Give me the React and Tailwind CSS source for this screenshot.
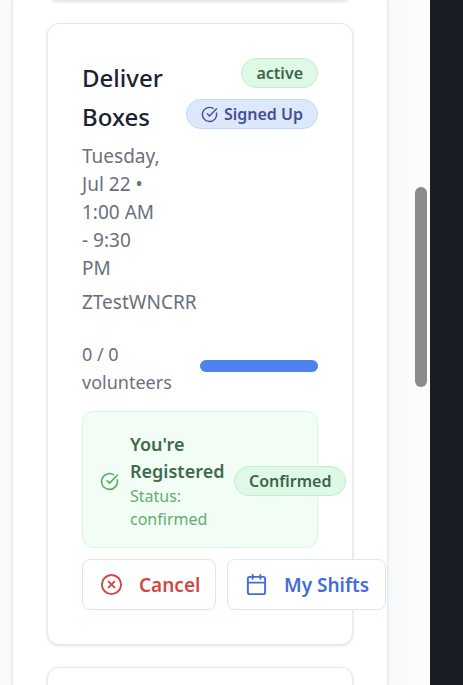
import React from "react";
import { CircleCheckBig, CircleX, Calendar } from "lucide-react";

const cardClass =
  "rounded-xl border border-[#e5e7eb] bg-white shadow-[0_1px_3px_rgba(0,0,0,0.12)]";

function Badge({ tone, children }) {
  const tones = {
    green: "border-[#bbf0cb] bg-[#e0f9e7] text-[#3c6549]",
    blue: "border-[#bfdafb] bg-[#dde8fb] text-[#435097]",
  };
  return (
    <span
      className={`inline-flex h-[30px] shrink-0 items-center gap-1.5 whitespace-nowrap rounded-full border px-3.5 text-base leading-6 font-semibold ${tones[tone]}`}
    >
      {children}
    </span>
  );
}

function ShiftCard() {
  return (
    <article className={`${cardClass} p-[34px] text-[19px] leading-7 text-[#69707d]`}>
      <header className="flex items-start justify-between">
        <div className="w-20">
          <h2 className="text-2xl leading-[39px] font-medium text-[#1b2230]">Deliver Boxes</h2>
          <p className="mt-1.5">Tuesday, Jul 22 • 1:00 AM - 9:30 PM</p>
          <p className="mt-1.5 whitespace-nowrap">ZTestWNCRR</p>
        </div>
        <div className="flex flex-col items-end gap-[11px]">
          <Badge tone="green">active</Badge>
          <Badge tone="blue">
            <CircleCheckBig className="size-[17px]" strokeWidth={2} />
            Signed Up
          </Badge>
        </div>
      </header>

      <div className="mt-6 flex items-center justify-between">
        <p className="w-24 text-lg leading-7">0 / 0 volunteers</p>
        <div
          className="mt-[-4px] h-3 w-1/2 rounded-full bg-[#4f82ee]"
          role="progressbar"
          aria-label="Volunteers"
        />
      </div>

      <section className="mt-[15px] flex items-center rounded-xl border border-[#d5f7df] bg-[#f2fdf5] px-[17px] pt-[19px] pb-4">
        <CircleCheckBig className="size-[19px] shrink-0 text-[#55ae68]" strokeWidth={2} />
        <div className="ml-[11px] w-[94px] shrink-0">
          <h3 className="text-lg leading-[27px] font-semibold text-[#3f6b4b]">You're Registered</h3>
          <p className="text-base leading-[23px] text-[#62ad70]">Status: confirmed</p>
        </div>
        <div className="ml-2.5 flex">
          <Badge tone="green">Confirmed</Badge>
        </div>
      </section>

      <div className="mt-[11px] flex gap-[11px] text-[19px] font-semibold">
        <button className="flex h-[51px] w-[134px] shrink-0 items-center rounded-lg border border-[#fbdada] bg-white pl-[17px] text-[#cf4a45]">
          <CircleX className="mr-4 size-[23px] shrink-0" strokeWidth={2} />
          Cancel
        </button>
        <button className="flex h-[51px] w-[159px] shrink-0 items-center whitespace-nowrap rounded-lg border border-[#d9e7fc] bg-white pl-[17px] text-[#456be0]">
          <Calendar className="mr-4 size-[23px] shrink-0" strokeWidth={2} />
          My Shifts
        </button>
      </div>
    </article>
  );
}

export default function App() {
  return (
    <div className="flex h-screen overflow-hidden bg-[#f8fafc] font-['Noto_Sans','Open_Sans',sans-serif]">
      <main className="ml-3 mr-5 flex min-w-0 flex-1 flex-col gap-[22px] border-x border-[#e6e8eb] bg-white px-[34px] shadow-[0_0_3px_rgba(0,0,0,0.08)]">
        <div className={`${cardClass} -mt-10 h-[41px] shrink-0`} />
        <ShiftCard />
        <div className={`${cardClass} h-40 shrink-0`} />
      </main>
      <div className="w-[22px] bg-[#fcfcfc] pt-[187px] pl-[7px]">
        <div className="h-[200px] w-3 rounded-full bg-[#8b8b8b]" />
      </div>
      <div className="w-[33px] bg-[#1a1d25]" />
    </div>
  );
}
